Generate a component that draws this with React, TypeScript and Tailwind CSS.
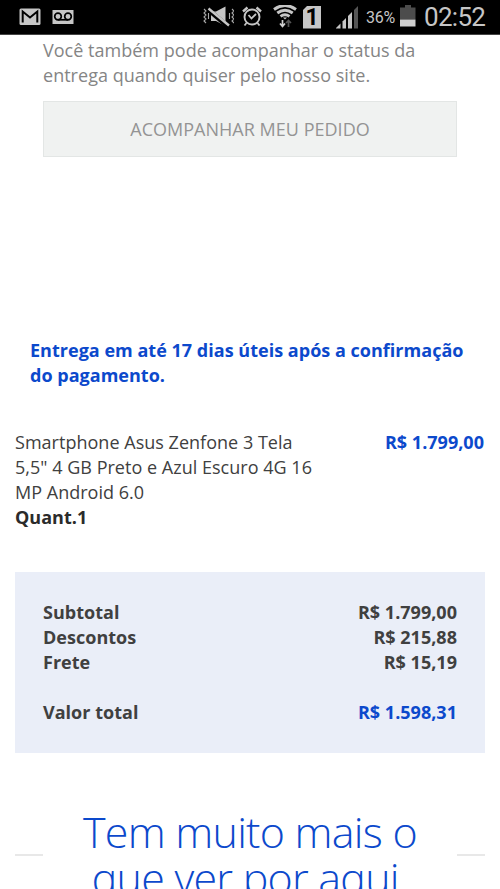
const summary = [
  { label: "Subtotal", value: "R$ 1.799,00" },
  { label: "Descontos", value: "R$ 215,88" },
  { label: "Frete", value: "R$ 15,19" },
];

function MailIcon() {
  return (
    <svg className="ml-[19px] h-[18px] w-[22px]" viewBox="0 0 22 18">
      <rect x="0.5" y="0.5" width="21" height="16.5" rx="1.5" fill="#c6c6c6" />
      <path d="M3.7 14.5V3.5L11 9.5L18.3 3.5V14.5" fill="none" stroke="#000" strokeWidth="2" />
    </svg>
  );
}

function VoicemailIcon() {
  return (
    <svg className="ml-[11px] h-[16px] w-[22px]" viewBox="0 0 22 16">
      <rect x="0.5" y="1" width="21" height="14" fill="#c6c6c6" />
      <g fill="none" stroke="#000" strokeWidth="1.7">
        <circle cx="6" cy="7.5" r="3.3" />
        <circle cx="16" cy="7.5" r="3.3" />
        <path d="M6 10.8H16" />
      </g>
    </svg>
  );
}

function MuteIcon() {
  return (
    <svg className="h-6 w-8" viewBox="0 0 32 24">
      <path d="M9 6.5H14L23.5 1.5V21L14 16H9Z" fill="#c6c6c6" />
      <path d="M6 4.5L26 21.5" stroke="#000" strokeWidth="4.8" />
      <path d="M6.5 3.5L27 20.5" stroke="#c6c6c6" strokeWidth="2.4" />
      <path
        d="M2 4L4 6L2 8L4 10L2 12L4 14L2 16L4 18M6.5 8V14M30 4L32 6L30 8L32 10L30 12L32 14L30 16L32 18M27.5 8V14"
        fill="none"
        stroke="#a8a8a8"
        strokeWidth="1.1"
      />
    </svg>
  );
}

function AlarmIcon() {
  return (
    <svg className="ml-[8px] h-6 w-5" viewBox="0 0 20 24" fill="none" stroke="#c6c6c6">
      <circle cx="10" cy="12" r="7.5" strokeWidth="1.9" />
      <path d="M1 6.5L5.5 2.5M19 6.5L14.5 2.5" strokeWidth="2.4" />
      <path d="M6.5 10L9.5 13.5L14 9" strokeWidth="1.8" />
      <path d="M4.5 18L2.5 20.5M15.5 18L17.5 20.5" strokeWidth="1.8" />
    </svg>
  );
}

function WifiIcon() {
  return (
    <svg className="ml-[11px] h-6 w-6" viewBox="0 0 24 24">
      <g fill="none" stroke="#c6c6c6" strokeWidth="2.9">
        <path d="M1 4.5Q12 -3.5 23 4.5" />
        <path d="M4.3 8Q12 2.3 19.7 8" />
        <path d="M7.5 11.3Q12 8 16.5 11.3" />
      </g>
      <path d="M10 12.5H14L12 14.5Z" fill="#c6c6c6" />
      <path d="M9.5 15V21M7 18.5L9.5 21.5L12 18.5" fill="none" stroke="#d0d0d0" strokeWidth="1.7" />
      <path d="M15.5 22V16M13 18L15.5 15.5L18 18" fill="none" stroke="#555" strokeWidth="1.7" />
    </svg>
  );
}

function SimIcon() {
  return (
    <div className="ml-[6px] flex h-[23px] w-[18px] justify-center bg-[#c6c6c6] font-[Roboto] text-[23px] leading-[23px] font-bold text-black [clip-path:polygon(25%_0,100%_0,100%_100%,0_100%,0_20%)]">
      1
    </div>
  );
}

function SignalIcon() {
  return (
    <svg className="ml-[15px] h-6 w-[23px]" viewBox="0 0 23 24">
      <path d="M0 23.5V23L4.5 18.5V23.5Z" fill="#c6c6c6" />
      <path d="M6.5 23.5V16.5L10 13V23.5Z" fill="#c6c6c6" />
      <path d="M12 23.5V11L16 7V23.5Z" fill="#c6c6c6" />
      <path d="M18 23.5V5L22 1V23.5Z" fill="#555" />
    </svg>
  );
}

function BatteryIcon() {
  return (
    <svg className="ml-[3px] h-6 w-4" viewBox="0 0 16 24">
      <path d="M5 0H11V2.5H15.5V14.5H0V2.5H5Z" fill="#4c4c4c" />
      <path d="M0 14.5H15.5V21.5H0Z" fill="#cecece" />
    </svg>
  );
}

function StatusBar() {
  return (
    <header className="flex h-[35px] items-center border-b border-[#444] bg-black font-[Roboto] text-[#c6c6c6]">
      <MailIcon />
      <VoicemailIcon />
      <div className="ml-auto flex items-center pr-[14px]">
        <MuteIcon />
        <AlarmIcon />
        <WifiIcon />
        <SimIcon />
        <SignalIcon />
        <span className="ml-[7px] w-[31px] text-[16px] tracking-[-0.2px] whitespace-nowrap">36%</span>
        <BatteryIcon />
        <span className="ml-[8px] w-[62px] text-[26px] leading-[32px] tracking-[-0.7px] whitespace-nowrap">02:52</span>
      </div>
    </header>
  );
}

export default function App() {
  return (
    <div className="h-[889px] w-[500px] overflow-hidden bg-white font-['Open_Sans',sans-serif] text-[18px] leading-[25px] tracking-[0.02px] text-[#404040]">
      <StatusBar />

      <main>
        {/* Tracking */}
        <section className="px-[43px] pt-[3px] text-[#858585]">
          <p>
            Você também pode acompanhar o status da
            <br />
            entrega quando quiser pelo nosso site.
          </p>
          <button className="mt-[13px] block h-[56px] w-full border border-[#e3e6e5] bg-[#f0f2f1] text-[#949494]">
            ACOMPANHAR MEU PEDIDO
          </button>
        </section>

        <p className="mt-[181px] pl-[30px] font-bold whitespace-nowrap text-[#0c49cc]">
          Entrega em até 17 dias úteis após a confirmação
          <br />
          do pagamento.
        </p>

        {/* Product */}
        <section className="mt-[42px] flex justify-between pr-4 pl-[15px] whitespace-nowrap">
          <div>
            <p>Smartphone Asus Zenfone 3 Tela</p>
            <p>5,5" 4 GB Preto e Azul Escuro 4G 16</p>
            <p>MP Android 6.0</p>
            <p className="font-bold text-[#2b2b2b]">Quant.1</p>
          </div>
          <span className="font-bold text-[#0c49cc]">R$ 1.799,00</span>
        </section>

        {/* Totals */}
        <section className="mx-[15px] mt-[42px] h-[181px] bg-[#eaeef8] px-[28px] pt-[28px] font-bold">
          {summary.map((row) => (
            <div key={row.label} className="flex justify-between">
              <span>{row.label}</span>
              <span>{row.value}</span>
            </div>
          ))}
          <div className="mt-[25px] flex justify-between">
            <span>Valor total</span>
            <span className="text-[#0c49cc]">R$ 1.598,31</span>
          </div>
        </section>

        <div className="mt-[56px] flex items-center px-[15px]">
          <span className="h-[2px] w-[28px] bg-[#e8e8e8]" />
          <h2 className="flex-1 text-center text-[43px] leading-[46px] font-light tracking-[-0.76px] whitespace-nowrap text-[#0c49cc]">
            Tem muito mais o
            <br />
            que ver por aqui.
          </h2>
          <span className="h-[2px] w-[28px] bg-[#e8e8e8]" />
        </div>
      </main>
    </div>
  );
}
